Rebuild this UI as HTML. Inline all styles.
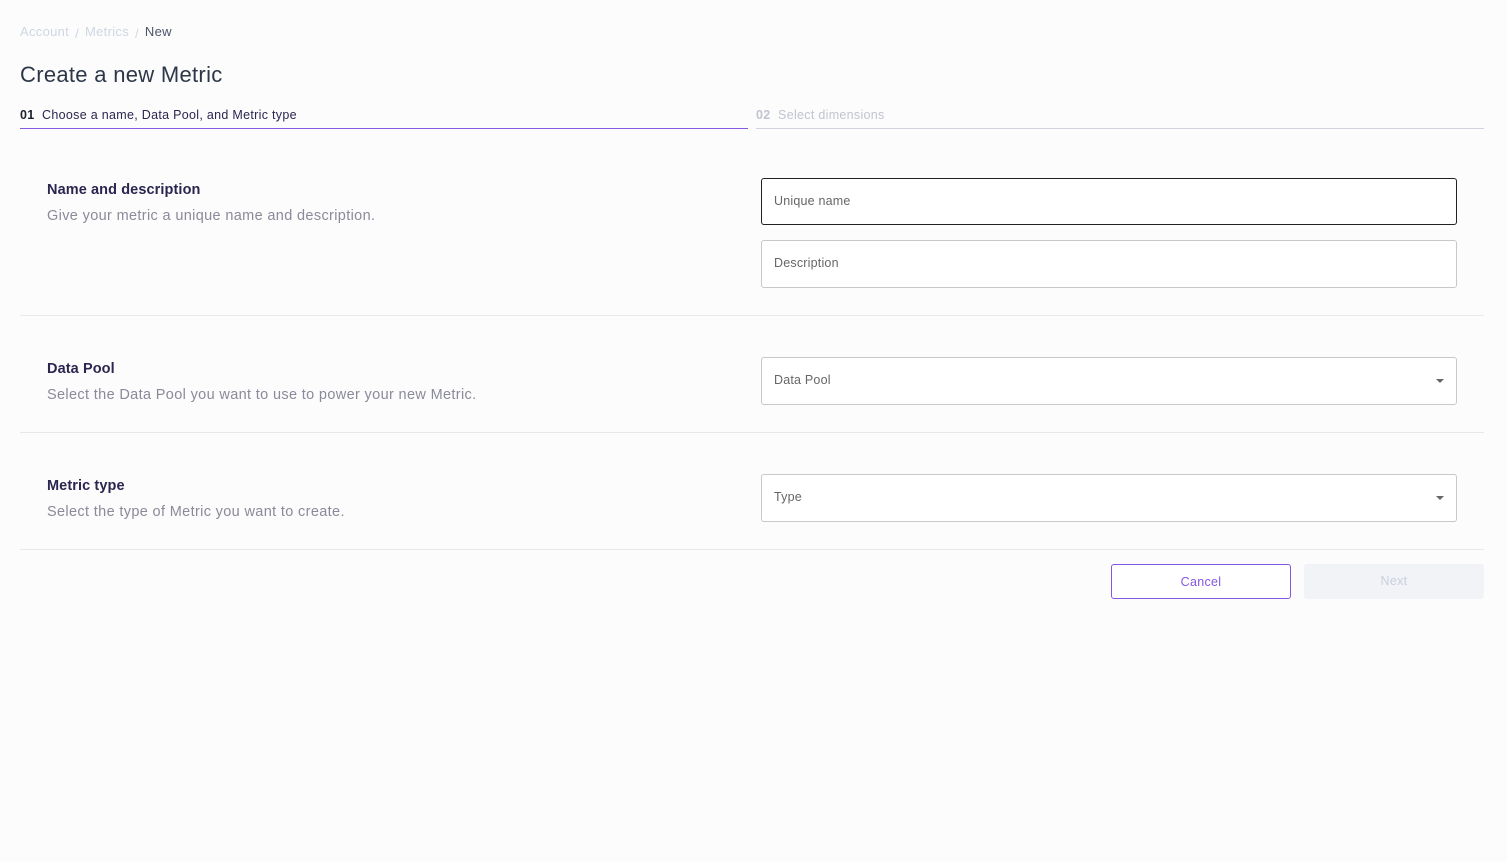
<!DOCTYPE html>
<html><head><meta charset="utf-8"><style>
*{box-sizing:border-box;margin:0;padding:0}
body{width:1507px;height:862px;background:#fcfcfc;font-family:"Liberation Sans",sans-serif;position:relative;overflow:hidden;color:#2c3e50}
.a{position:absolute}
.bc{top:24px;left:20px;font-size:13px;color:#cfd6e3;letter-spacing:0.3px}
.bc span.s{margin:0 6px;position:relative;top:2px}
.bc .n{color:#4a5568}
h1{position:absolute;top:62px;left:20px;font-size:22px;font-weight:normal;color:#2d3748;letter-spacing:0.3px}
.step{top:108px;font-size:12.5px;letter-spacing:0.3px}
.line{height:1px}
.sec{left:20px;width:1464px;height:1px;background:#e6e8ec}
.t{left:47px;font-size:14.5px;font-weight:bold;color:#2a2650;letter-spacing:0.1px}
.d{left:47px;font-size:14.5px;color:#8a8a9a;letter-spacing:0.35px}
.in{left:761px;width:696px;height:48px;border:1px solid #c8c8cc;border-radius:3px;background:#fff;font-size:12.5px;color:#666;padding:15px 12px;letter-spacing:0.2px}
.car{position:absolute;right:12px;top:21px;width:0;height:0;border-left:4px solid transparent;border-right:4px solid transparent;border-top:4px solid #666}
.btn{top:564px;width:180px;height:35px;border-radius:3px;font-size:12.5px;text-align:center;line-height:35px;letter-spacing:0.3px}
</style></head><body>
<div class="a bc">Account<span class="s">/</span>Metrics<span class="s">/</span><span class="n">New</span></div>
<h1>Create a new Metric</h1>
<div class="a step" style="left:20px;color:#2a2650"><b style="color:#1a202c">01</b>&nbsp; Choose a name, Data Pool, and Metric type</div>
<div class="a line" style="left:20px;top:128px;width:728px;background:#8458e0"></div>
<div class="a step" style="left:756px;color:#c0c4d0"><b>02</b>&nbsp; Select dimensions</div>
<div class="a line" style="left:756px;top:128px;width:728px;background:#d4d0e0"></div>

<div class="a t" style="top:182px">Name and description</div>
<div class="a d" style="top:208px">Give your metric a unique name and description.</div>
<div class="a in" style="top:178px;height:47px;border-color:#222">Unique name</div>
<div class="a in" style="top:240px">Description</div>
<div class="a sec" style="top:315px"></div>

<div class="a t" style="top:361px">Data Pool</div>
<div class="a d" style="top:387px">Select the Data Pool you want to use to power your new Metric.</div>
<div class="a in" style="top:357px">Data Pool<div class="car"></div></div>
<div class="a sec" style="top:432px"></div>

<div class="a t" style="top:478px">Metric type</div>
<div class="a d" style="top:504px">Select the type of Metric you want to create.</div>
<div class="a in" style="top:474px">Type<div class="car"></div></div>
<div class="a sec" style="top:549px"></div>

<div class="a btn" style="left:1111px;border:1px solid #8458e0;color:#8458e0;background:#fff">Cancel</div>
<div class="a btn" style="left:1304px;background:#f1f3f7;color:#c8d0dc">Next</div>
</body></html>
